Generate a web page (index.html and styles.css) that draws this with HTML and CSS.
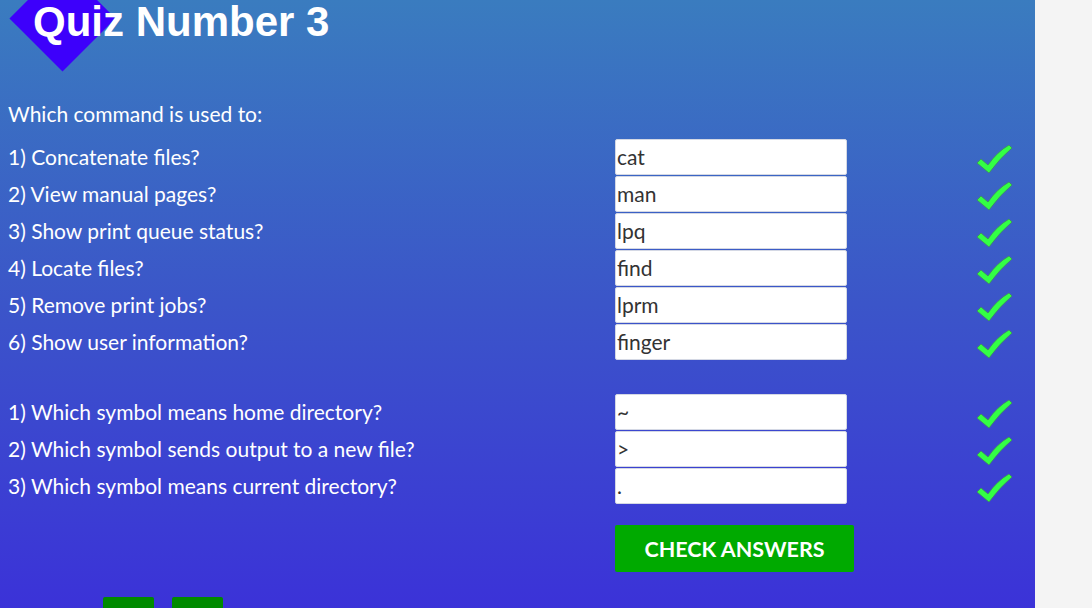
FILE: index.html
```html
<!DOCTYPE html>
<html lang="en">
<head>
<meta charset="utf-8">
<title>Quiz Number 3</title>
<link rel="stylesheet" href="styles.css">
</head>
<body>
<main class="page">
  <header class="title-bar">
    <span class="diamond"></span>
    <h1 class="title">Quiz Number 3</h1>
  </header>

  <p class="intro">Which command is used to:</p>

  <div class="quiz">
    <label class="q">1) Concatenate files?</label>
    <input class="answer" type="text" value="cat">
    <svg class="check" viewBox="0 0 36 30"><path d="M1 19 L5 15 L12 21 Q21 8 33 1 L36 4 Q24 14 13 29 Z"/></svg>

    <label class="q">2) View manual pages?</label>
    <input class="answer" type="text" value="man">
    <svg class="check" viewBox="0 0 36 30"><path d="M1 19 L5 15 L12 21 Q21 8 33 1 L36 4 Q24 14 13 29 Z"/></svg>

    <label class="q">3) Show print queue status?</label>
    <input class="answer" type="text" value="lpq">
    <svg class="check" viewBox="0 0 36 30"><path d="M1 19 L5 15 L12 21 Q21 8 33 1 L36 4 Q24 14 13 29 Z"/></svg>

    <label class="q">4) Locate files?</label>
    <input class="answer" type="text" value="find">
    <svg class="check" viewBox="0 0 36 30"><path d="M1 19 L5 15 L12 21 Q21 8 33 1 L36 4 Q24 14 13 29 Z"/></svg>

    <label class="q">5) Remove print jobs?</label>
    <input class="answer" type="text" value="lprm">
    <svg class="check" viewBox="0 0 36 30"><path d="M1 19 L5 15 L12 21 Q21 8 33 1 L36 4 Q24 14 13 29 Z"/></svg>

    <label class="q">6) Show user information?</label>
    <input class="answer" type="text" value="finger">
    <svg class="check" viewBox="0 0 36 30"><path d="M1 19 L5 15 L12 21 Q21 8 33 1 L36 4 Q24 14 13 29 Z"/></svg>
  </div>

  <div class="quiz quiz-second">
    <label class="q">1) Which symbol means home directory?</label>
    <input class="answer" type="text" value="~">
    <svg class="check" viewBox="0 0 36 30"><path d="M1 19 L5 15 L12 21 Q21 8 33 1 L36 4 Q24 14 13 29 Z"/></svg>

    <label class="q">2) Which symbol sends output to a new file?</label>
    <input class="answer" type="text" value="&gt;">
    <svg class="check" viewBox="0 0 36 30"><path d="M1 19 L5 15 L12 21 Q21 8 33 1 L36 4 Q24 14 13 29 Z"/></svg>

    <label class="q">3) Which symbol means current directory?</label>
    <input class="answer" type="text" value=".">
    <svg class="check" viewBox="0 0 36 30"><path d="M1 19 L5 15 L12 21 Q21 8 33 1 L36 4 Q24 14 13 29 Z"/></svg>
  </div>

  <div class="actions">
    <button class="check-btn" type="button">CHECK ANSWERS</button>
  </div>

  <nav class="nav">
    <span class="nav-btn"></span>
    <span class="nav-btn"></span>
  </nav>
</main>
</body>
</html>
```

FILE: styles.css
```css
html, body {
  margin: 0;
  padding: 0;
  height: 100%;
  overflow: hidden;
}

body {
  background: #f4f4f4;
  font-family: Lato, "Liberation Sans", sans-serif;
}

.page {
  width: 1035px;
  height: 608px;
  box-sizing: border-box;
  background: linear-gradient(180deg, #3a7cbf 0%, #3b55c9 50%, #3b32d8 100%);
  color: #fff;
  overflow: hidden;
  display: flex;
  flex-direction: column;
}

.title-bar {
  position: relative;
  height: 44px;
  padding-left: 33px;
}

.diamond {
  position: absolute;
  left: 25px;
  top: -19px;
  width: 75px;
  height: 75px;
  background: #3d00fb;
  transform: rotate(45deg);
}

.title {
  position: relative;
  margin: 0;
  font-family: "Liberation Sans", Arial, sans-serif;
  font-weight: bold;
  font-size: 42px;
  line-height: 44px;
  color: #fff;
}

.intro {
  margin: 57px 0 0 8px;
  font-size: 21px;
  line-height: 25px;
}

.quiz {
  margin-top: 13px;
  padding-left: 8px;
  display: grid;
  grid-template-columns: 607px 232px 129px 36px;
  grid-auto-rows: 36px;
  row-gap: 1px;
  align-items: center;
}

.quiz-second {
  margin-top: 34px;
}

.q {
  font-size: 21px;
  line-height: 25px;
  padding-bottom: 2px;
  color: #fff;
}

.answer {
  grid-column: 2;
  box-sizing: border-box;
  width: 232px;
  height: 36px;
  margin: 0;
  padding: 0 1px 2px;
  border: 1px solid #d4d8e4;
  border-radius: 2px;
  background: #fff;
  color: #333;
  font-family: Lato, "Liberation Sans", sans-serif;
  font-size: 21px;
  outline: none;
}

.check {
  grid-column: 4;
  width: 36px;
  height: 30px;
  margin-top: 4px;
}

.check path {
  fill: #33ff44;
  stroke: #3f8e5a;
  stroke-width: 0.8;
  stroke-linejoin: round;
}

.actions {
  margin-top: 21px;
  padding-left: 615px;
}

.check-btn {
  width: 239px;
  height: 47px;
  border: none;
  border-radius: 2px;
  background: #00aa00;
  color: #fff;
  font-family: Lato, "Liberation Sans", sans-serif;
  font-weight: bold;
  font-size: 21.5px;
  padding: 0;
  cursor: pointer;
}

.nav {
  margin-top: 25px;
  padding-left: 103px;
  display: flex;
  gap: 18px;
}

.nav-btn {
  width: 51px;
  height: 40px;
  background: #008a00;
  border-radius: 2px 2px 0 0;
}
```
